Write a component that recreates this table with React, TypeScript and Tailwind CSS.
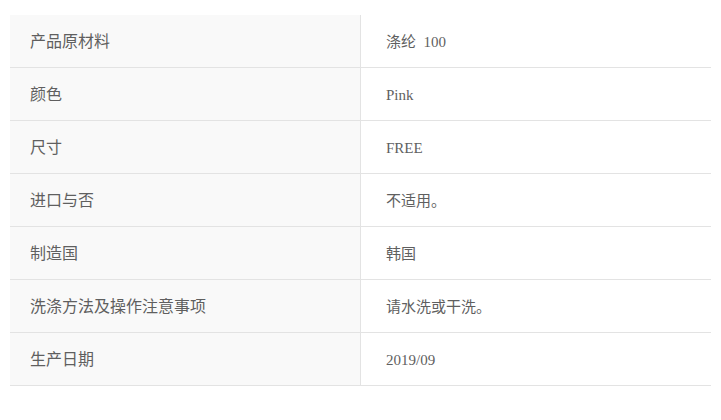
const rows = [
  { label: '产品原材料', value: '涤纶  100' },
  { label: '颜色', value: 'Pink' },
  { label: '尺寸', value: 'FREE' },
  { label: '进口与否', value: '不适用。' },
  { label: '制造国', value: '韩国' },
  { label: '洗涤方法及操作注意事项', value: '请水洗或干洗。' },
  { label: '生产日期', value: '2019/09' },
]

export default function App() {
  return (
    <div className="w-[721px] h-[420px] bg-white pt-[15px] pl-[10px]">
      <div className="w-[701px] flex flex-col">
        {rows.map((row) => (
          <div key={row.label} className="flex h-[53px] border-b border-[#e3e3e3]">
            <div
              className="w-[351px] bg-[#f9f9f9] border-r border-[#e3e3e3] flex items-center pl-[20px] pb-[3px] text-[16px] text-[#5f5f5f]"
              style={{ fontFamily: '"Noto Sans CJK SC", sans-serif' }}
            >
              {row.label}
            </div>
            <div
              className="flex-1 flex items-center pl-[25px] pt-[2px] text-[15px] text-[#5f5f5f] whitespace-pre"
              style={{ fontFamily: '"Liberation Serif", "Noto Sans CJK SC", serif' }}
            >
              {row.value}
            </div>
          </div>
        ))}
      </div>
    </div>
  )
}
